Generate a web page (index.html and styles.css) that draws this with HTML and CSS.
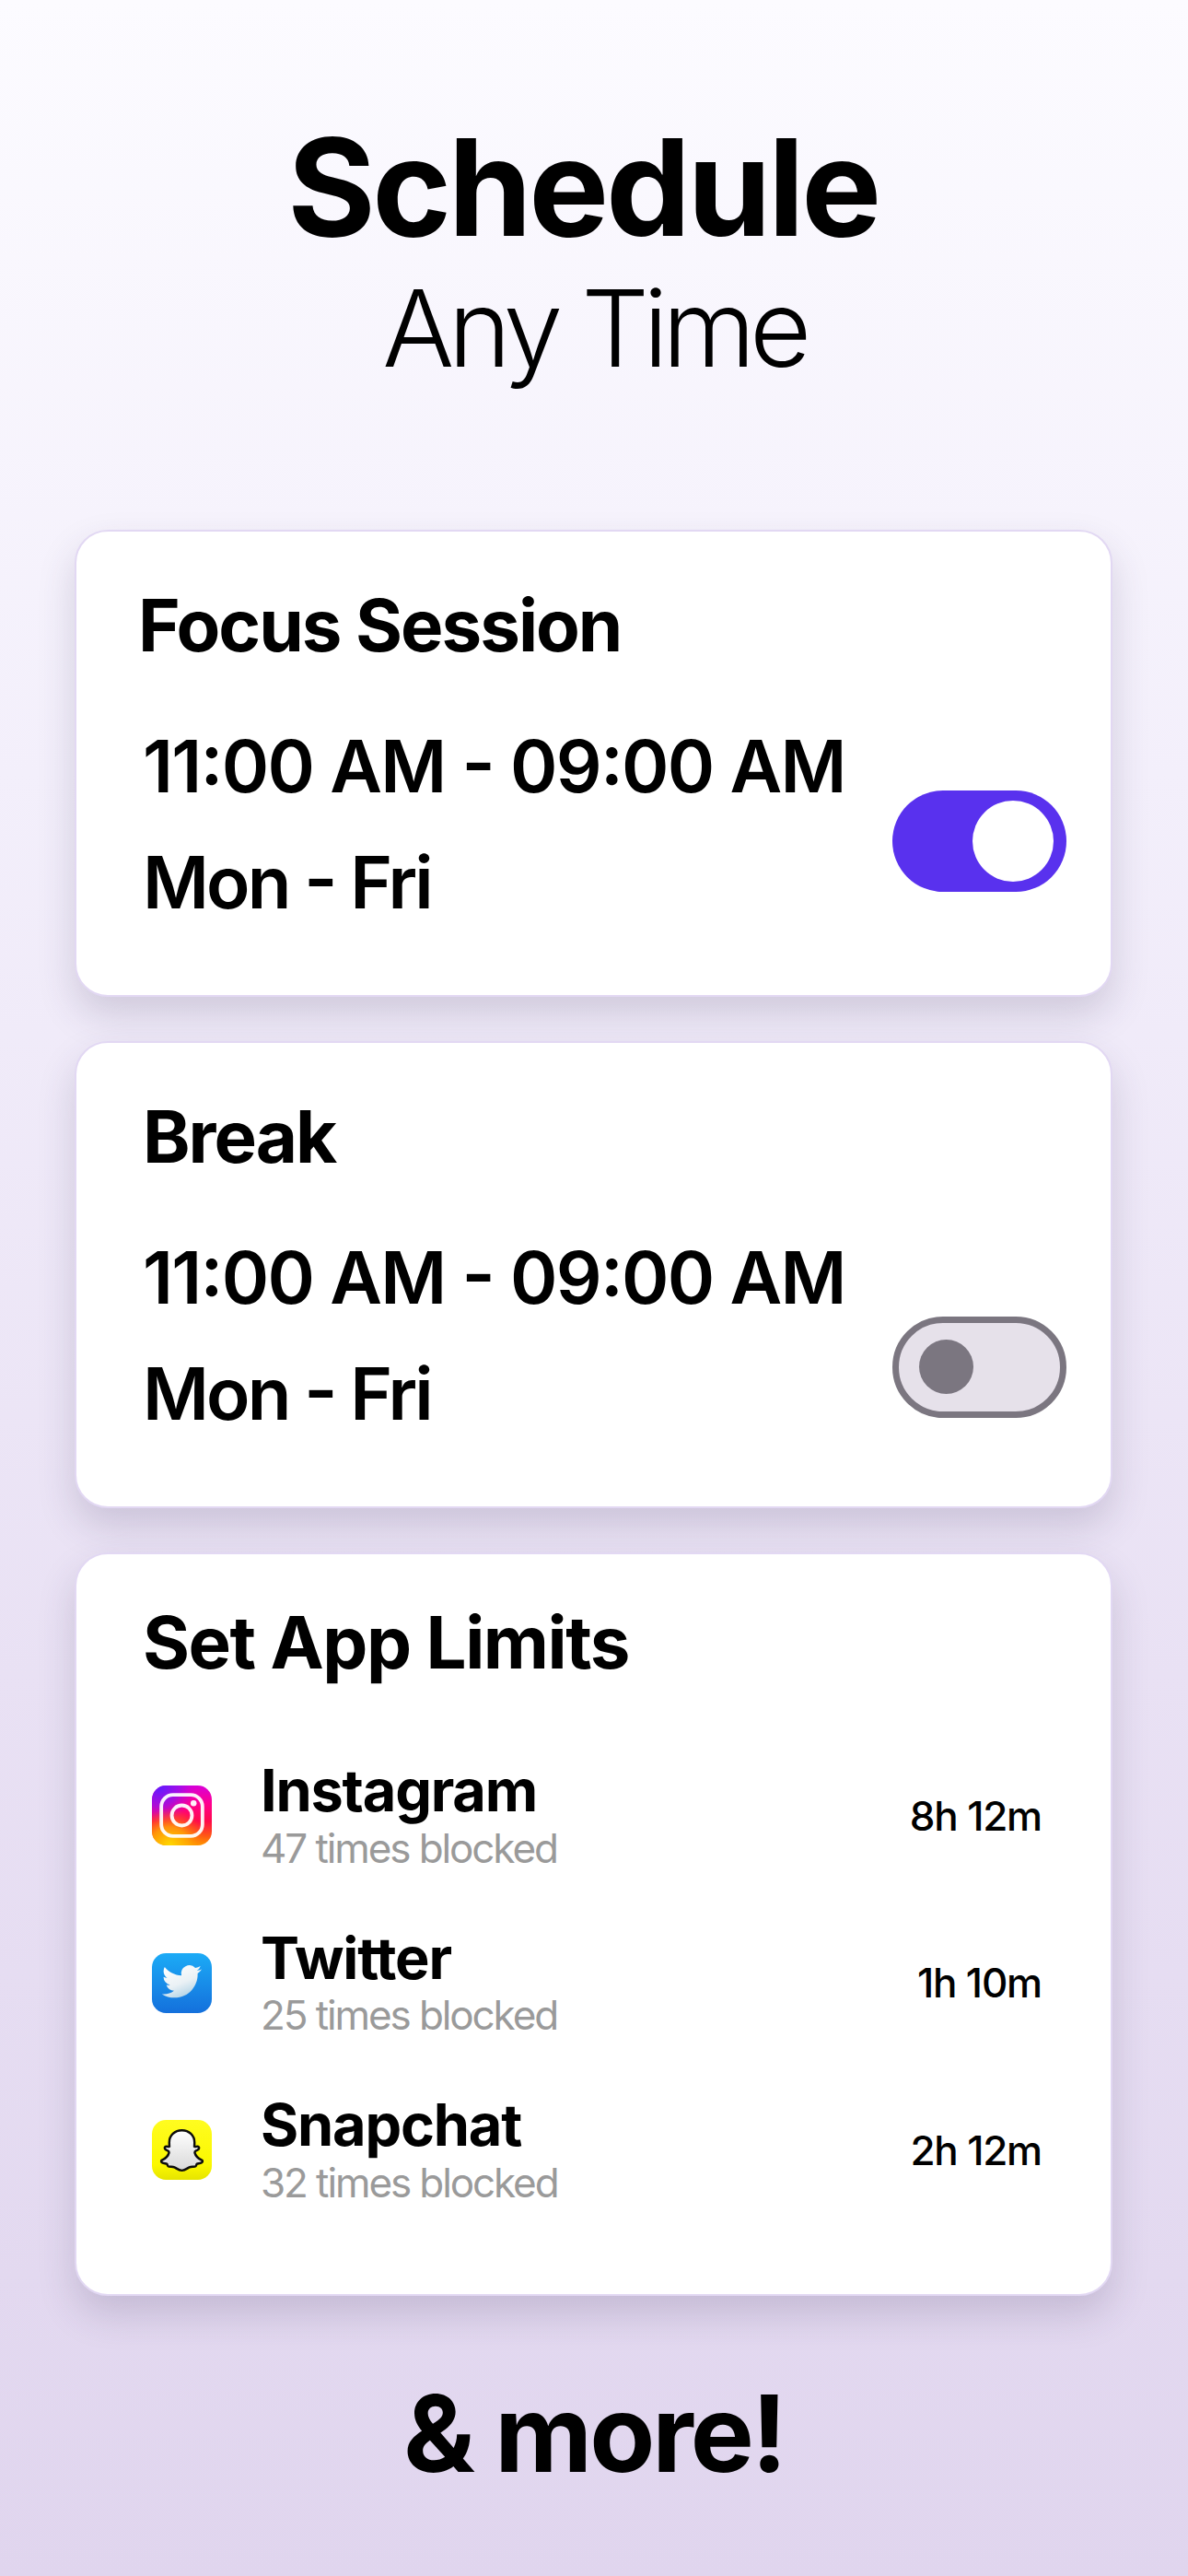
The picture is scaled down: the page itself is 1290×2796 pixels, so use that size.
FILE: index.html
```html
<!DOCTYPE html>
<html lang="en">
<head>
<meta charset="utf-8">
<title>Schedule Any Time</title>
<link rel="stylesheet" href="styles.css">
</head>
<body>
<main class="page">
  <header class="hero">
    <h1 class="hero-title">Schedule</h1>
    <p class="hero-sub">Any Time</p>
  </header>

  <section class="card card-schedule">
    <h2 class="card-title card-title-focus">Focus Session</h2>
    <div class="schedule-row">
      <div class="schedule-text">
        <p class="schedule-line">11:00 AM - 09:00 AM</p>
        <p class="schedule-line schedule-days">Mon - Fri</p>
      </div>
      <div class="toggle toggle-on"><span class="knob"></span></div>
    </div>
  </section>

  <section class="card card-schedule">
    <h2 class="card-title">Break</h2>
    <div class="schedule-row">
      <div class="schedule-text">
        <p class="schedule-line">11:00 AM - 09:00 AM</p>
        <p class="schedule-line schedule-days">Mon - Fri</p>
      </div>
      <div class="toggle toggle-off"><span class="knob"></span></div>
    </div>
  </section>

  <section class="card card-limits">
    <h2 class="card-title card-title-limits">Set App Limits</h2>
    <ul class="app-list">
      <li class="app-row">
        <svg class="app-icon" viewBox="0 0 64 64" aria-hidden="true">
          <defs>
            <linearGradient id="igBase" x1="0" y1="0" x2="0" y2="1">
              <stop offset="0" stop-color="#d800d8"/>
              <stop offset=".3" stop-color="#ff0090"/>
              <stop offset=".6" stop-color="#ff0a4a"/>
              <stop offset=".85" stop-color="#ff5a14"/>
              <stop offset="1" stop-color="#ff9a00"/>
            </linearGradient>
            <radialGradient id="igPurple" cx="0.12" cy="0" r="0.62">
              <stop offset="0" stop-color="#5a1cff"/>
              <stop offset=".55" stop-color="#9010f0" stop-opacity=".75"/>
              <stop offset="1" stop-color="#c000e0" stop-opacity="0"/>
            </radialGradient>
            <radialGradient id="igYellow" cx="0.3" cy="1" r="0.62">
              <stop offset="0" stop-color="#ffd800"/>
              <stop offset=".5" stop-color="#ffb000" stop-opacity=".75"/>
              <stop offset="1" stop-color="#ff7000" stop-opacity="0"/>
            </radialGradient>
          </defs>
          <rect width="64" height="64" rx="15" fill="url(#igBase)"/>
          <rect width="64" height="64" rx="15" fill="url(#igPurple)"/>
          <rect width="64" height="64" rx="15" fill="url(#igYellow)"/>
          <rect x="10" y="10" width="44" height="44" rx="12.500" fill="none" stroke="#fff" stroke-opacity=".94" stroke-width="3.800"/>
          <circle cx="32" cy="32" r="10.800" fill="none" stroke="#fff" stroke-opacity=".94" stroke-width="3.800"/>
          <circle cx="44.500" cy="19" r="3.200" fill="#fff" fill-opacity=".95"/>
        </svg>
        <div class="app-info">
          <p class="app-name">Instagram</p>
          <p class="app-meta">47 times blocked</p>
        </div>
        <span class="app-time">8h 12m</span>
      </li>
      <li class="app-row">
        <svg class="app-icon" viewBox="0 0 64 64" aria-hidden="true">
          <defs>
            <linearGradient id="twBase" x1="0" y1="0" x2="0" y2="1">
              <stop offset="0" stop-color="#1cabf6"/>
              <stop offset="1" stop-color="#1470dc"/>
            </linearGradient>
            <linearGradient id="twBird" x1="0.2" y1="0" x2="0.7" y2="1">
              <stop offset="0" stop-color="#ffffff"/>
              <stop offset=".55" stop-color="#eaf1f5"/>
              <stop offset="1" stop-color="#a9cfe4"/>
            </linearGradient>
          </defs>
          <rect width="64" height="64" rx="15" fill="url(#twBase)"/>
          <path fill="url(#twBird)" transform="translate(10.700 9.100) scale(1.770)" d="M23.953 4.570a10 10 0 01-2.825.775 4.958 4.958 0 002.163-2.723c-.951.555-2.005.959-3.127 1.184a4.920 4.920 0 00-8.384 4.482C7.690 8.095 4.067 6.130 1.640 3.162a4.822 4.822 0 00-.666 2.475c0 1.710.870 3.213 2.188 4.096a4.904 4.904 0 01-2.228-.616v.060a4.923 4.923 0 003.946 4.827 4.996 4.996 0 01-2.212.085 4.936 4.936 0 004.604 3.417 9.867 9.867 0 01-6.102 2.105c-.390 0-.779-.023-1.170-.067a13.995 13.995 0 007.557 2.209c9.053 0 13.998-7.496 13.998-13.985 0-.210 0-.420-.015-.630A9.935 9.935 0 0024 4.590z"/>
        </svg>
        <div class="app-info">
          <p class="app-name">Twitter</p>
          <p class="app-meta">25 times blocked</p>
        </div>
        <span class="app-time">1h 10m</span>
      </li>
      <li class="app-row">
        <svg class="app-icon" viewBox="0 0 64 64" aria-hidden="true">
          <defs>
            <linearGradient id="scBase" x1="0" y1="0" x2="0" y2="1">
              <stop offset="0" stop-color="#fffc20"/>
              <stop offset=".75" stop-color="#fbf800"/>
              <stop offset="1" stop-color="#e6e400"/>
            </linearGradient>
            <linearGradient id="scGhost" x1="0" y1="0" x2="0" y2="1">
              <stop offset="0" stop-color="#ffffff"/>
              <stop offset="1" stop-color="#d8d8d8"/>
            </linearGradient>
          </defs>
          <rect width="64" height="64" rx="15" fill="url(#scBase)"/>
          <path fill="url(#scGhost)" stroke="#0c0c0c" stroke-width="2.400" stroke-linejoin="round" d="M32 11C39.500 11 45.500 16.500 45.500 24C45.500 26 45.400 27.500 45.300 28.500C47 29 48.800 27.500 50 28.800C51 30 50 31.500 48.500 32.200C47 33 45.500 33.300 45.700 34.800C46.500 38 50 41.500 53.300 43C54.500 43.700 54.300 45 53 45.600C51.500 46.300 49.500 46.500 48 47C47.300 48 47.500 49.500 46 49.800C44 50.200 42 49.500 40 50.500C37.500 51.700 35.500 54 32 54C28.500 54 26.500 51.700 24 50.500C22 49.500 20 50.200 18 49.800C16.500 49.500 16.700 48 16 47C14.500 46.500 12.500 46.300 11 45.600C9.700 45 9.500 43.700 10.700 43C14 41.500 17.500 38 18.300 34.800C18.500 33.300 17 33 15.500 32.200C14 31.500 13 30 14 28.800C15.200 27.500 17 29 18.700 28.500C18.600 27.500 18.500 26 18.500 24C18.500 16.500 24.500 11 32 11Z"/>
        </svg>
        <div class="app-info">
          <p class="app-name">Snapchat</p>
          <p class="app-meta">32 times blocked</p>
        </div>
        <span class="app-time">2h 12m</span>
      </li>
    </ul>
  </section>

  <footer class="closing">&amp; more!</footer>
</main>
</body>
</html>
```

FILE: styles.css
```css
* { box-sizing: border-box; }
html, body { margin: 0; padding: 0; }
body {
  width: 1290px;
  height: 2796px;
  overflow: hidden;
  font-family: Inter, "Liberation Sans", sans-serif;
  color: #000;
  background: linear-gradient(180deg, #fcfbff 0%, #f3effb 30%, #e9e1f4 65%, #e0d5ee 100%);
}
h1, h2, p, ul { margin: 0; padding: 0; }
ul { list-style: none; }

.page {
  display: flex;
  flex-direction: column;
  align-items: center;
  height: 100%;
  padding-top: 123px;
}

.hero { text-align: center; height: 452px; }
.hero-title {
  padding-right: 24px;
  font-size: 146px;
  line-height: 160px;
  font-weight: 700;
  letter-spacing: -3.400px;
}
.hero-sub {
  margin-top: 3px;
  font-size: 116px;
  line-height: 140px;
  font-weight: 300;
  letter-spacing: -6.400px;
}

.card {
  width: 1127px;
  margin-right: 1px;
  background: #fff;
  border: 2px solid #e2d8f3;
  border-radius: 36px;
  box-shadow: 0 20px 40px rgba(60, 50, 90, 0.18);
}
.card-schedule {
  height: 506.500px;
  margin-bottom: 48.500px;
  padding: 56px 48px 0 72px;
}
.card-title {
  font-size: 78px;
  line-height: 92px;
  font-weight: 700;
  letter-spacing: -2px;
}
.card-title-focus { margin-left: -5px; }
.card-title-limits { letter-spacing: -1.500px; }

.schedule-row {
  display: flex;
  justify-content: space-between;
  align-items: flex-end;
  margin-top: 43.600px;
}
.schedule-line {
  font-size: 78px;
  line-height: 126px;
  font-weight: 600;
  letter-spacing: -1.700px;
  font-feature-settings: "case";
}
.schedule-days { letter-spacing: -2.900px; }

.toggle {
  flex: none;
  display: flex;
  align-items: center;
  width: 189px;
  height: 110px;
  border-radius: 55px;
}
.knob { display: block; border-radius: 50%; }
.toggle-on {
  margin-bottom: 53px;
  background: #5931ee;
  justify-content: flex-end;
  padding-right: 14px;
}
.toggle-on .knob { width: 88px; height: 88px; background: #fff; }
.toggle-off {
  margin-bottom: 37px;
  background: #e6e1ea;
  border: 7px solid #7b7680;
  padding-left: 22px;
}
.toggle-off .knob { width: 59px; height: 59px; background: #7b7680; }

.card-limits {
  height: 807px;
  padding: 50px 75px 0 72px;
}
.app-list { margin-top: 50.750px; }
.app-row {
  display: flex;
  align-items: center;
  height: 181.500px;
}
.app-icon {
  flex: none;
  width: 65px;
  height: 65px;
  margin-left: 10px;
  margin-right: 53px;
}
.app-info { flex: 1; }
.app-name {
  font-size: 63px;
  line-height: 66px;
  font-weight: 700;
  letter-spacing: -1.200px;
}
.app-meta {
  margin-top: 3.500px;
  margin-bottom: -0.500px;
  font-size: 44px;
  line-height: 52px;
  font-weight: 400;
  color: #9a9a9a;
  letter-spacing: -2.100px;
}
.app-time {
  font-size: 44px;
  font-weight: 500;
  letter-spacing: -1.200px;
}

.closing {
  margin-top: 79px;
  font-size: 116px;
  line-height: 140px;
  font-weight: 700;
  letter-spacing: -3px;
}
```
